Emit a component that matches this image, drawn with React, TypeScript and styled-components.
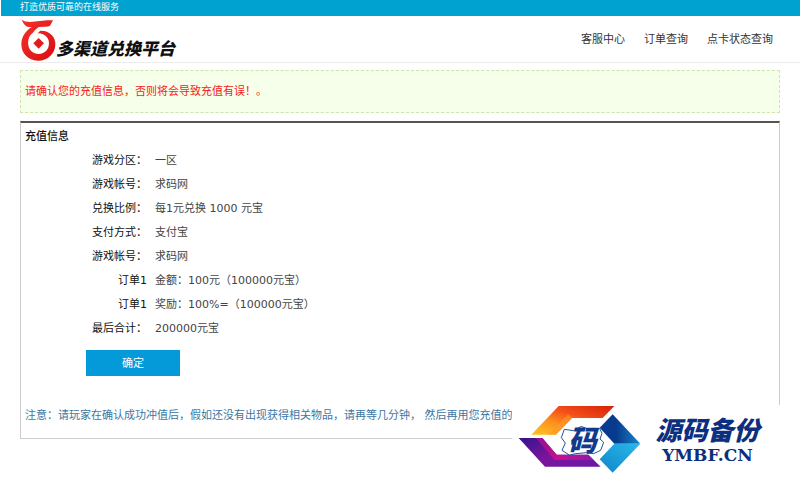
import React from "react";
import styled, { createGlobalStyle } from "styled-components";

const GlobalStyle = createGlobalStyle`
  * { box-sizing: border-box; }
  body {
    margin: 0;
    background: #fff;
    color: #444;
    font: 11px/16px "DejaVu Sans", "Noto Sans CJK SC", sans-serif;
  }
`;

const Page = styled.div`
  position: relative;
  padding-bottom: 45px;
`;

const TopBar = styled.div`
  height: 16px;
  margin-left: 1px;
  padding: 0 19px;
  background: #00a3cf;
  color: #fff;
  font-size: 9px;
  line-height: 15px;
`;

const Header = styled.header`
  display: flex;
  justify-content: space-between;
  align-items: center;
  height: 47px;
  padding: 2px 27px 0 20px;
  border-bottom: 1px solid #ececec;
`;

const Brand = styled.a`
  display: flex;
  align-items: flex-end;
  color: #111;
  text-decoration: none;
`;

const BrandMark = styled.svg`
  width: 36px;
  height: 43px;
`;

const BrandName = styled.span`
  font: italic 900 17px/28px "Noto Sans CJK SC", sans-serif;
`;

const Nav = styled.nav`
  display: flex;
  gap: 19px;
`;

const NavLink = styled.a`
  color: #333;
  text-decoration: none;
`;

const Main = styled.main`
  padding: 7px 20px 0;
`;

const Notice = styled.p`
  margin: 0 0 8px;
  padding: 13px 4px 12px;
  border: 1px dashed #cfe3b0;
  background: #f5ffe9;
  color: #f8211c;
`;

const Panel = styled.section`
  padding: 6px 4px 14px;
  border: 1px solid #ccc;
  border-top: 2px solid #555;
`;

const PanelTitle = styled.h1`
  margin: 0;
  color: #111;
  font-size: 11px;
  font-weight: 500;
`;

const Details = styled.dl`
  display: grid;
  grid-template-columns: 122px 1fr;
  column-gap: 8px;
  margin: 4px 0 9px;
  line-height: 24px;
`;

const Term = styled.dt`
  color: #111;
  text-align: right;
`;

const Value = styled.dd`
  margin: 0;
`;

const Submit = styled.button`
  display: block;
  width: 94px;
  height: 26px;
  margin: 0 0 32px 61px;
  padding: 2px 0 0;
  border: 0;
  background: #049ad9;
  color: #fff;
  font: inherit;
`;

const Hint = styled.p`
  margin: 0;
  color: #3d76a3;
`;

const Watermark = styled.aside`
  position: absolute;
  right: 18px;
  bottom: 9px;
  display: flex;
  align-items: center;
  width: 270px;
  height: 70px;
  padding: 0 8px 0 6px;
  background: #fff;
`;

const WatermarkMark = styled.svg`
  flex: none;
  width: 123px;
  height: 70px;
`;

const WatermarkText = styled.div`
  flex: 1;
  color: #0c2f80;
  text-align: center;
`;

const WatermarkName = styled.div`
  font: italic 900 26px/30px "Noto Sans CJK SC", sans-serif;
`;

const WatermarkDomain = styled.div`
  font: bold 17px/22px "DejaVu Serif", serif;
`;

const details = [
  ["游戏分区：", "一区"],
  ["游戏帐号：", "求码网"],
  ["兑换比例：", "每1元兑换 1000 元宝"],
  ["支付方式：", "支付宝"],
  ["游戏帐号：", "求码网"],
  ["订单1", "金额：100元（100000元宝）"],
  ["订单1", "奖励：100%=（100000元宝）"],
  ["最后合计：", "200000元宝"],
];

export default function App() {
  return (
    <Page>
      <GlobalStyle />
      <TopBar>打造优质可靠的在线服务</TopBar>
      <Header>
        <Brand href="#">
          <BrandMark viewBox="0 0 108 129" aria-hidden="true">
            <defs>
              <linearGradient id="ring" x1="0" y1="0" x2="1" y2="1">
                <stop offset="0" stopColor="#f3332b" />
                <stop offset="1" stopColor="#d80d12" />
              </linearGradient>
            </defs>
            <path
              fill="url(#ring)"
              d="M5 2Q14 9 30 9L82 4Q94 3 99 4L90 20Q86 23 75 23L56 24Q46 31 38 42C20 54 20 87 37 99C55 112 82 102 86 81C91 60 77 43 53 43L61 35C88 34 108 53 106 78C104 107 81 126 53 125C25 124 4 104 4 76C4 53 17 36 35 24L26 24Q13 22 5 2Z"
            />
            <path fill="#e31b1b" d="M56 57L72 73L56 89L40 73Z" />
          </BrandMark>
          <BrandName>多渠道兑换平台</BrandName>
        </Brand>
        <Nav>
          <NavLink href="#">客服中心</NavLink>
          <NavLink href="#">订单查询</NavLink>
          <NavLink href="#">点卡状态查询</NavLink>
        </Nav>
      </Header>
      <Main>
        <Notice>请确认您的充值信息，否则将会导致充值有误！。</Notice>
        <Panel>
          <PanelTitle>充值信息</PanelTitle>
          <Details>
            {details.map(([term, value], i) => (
              <React.Fragment key={i}>
                <Term>{term}</Term>
                <Value>{value}</Value>
              </React.Fragment>
            ))}
          </Details>
          <Submit type="button">确定</Submit>
          <Hint>
            注意：请玩家在确认成功冲值后，假如还没有出现获得相关物品，请再等几分钟， 然后再用您充值的
          </Hint>
        </Panel>
      </Main>
      <Watermark>
        <WatermarkMark viewBox="39 30 369 210" aria-hidden="true">
          <defs>
            <linearGradient id="warm" x1="0" y1="1" x2="1" y2="0">
              <stop offset="0" stopColor="#ffc820" />
              <stop offset="0.35" stopColor="#fd8f1e" />
              <stop offset="0.6" stopColor="#f4501a" />
              <stop offset="1" stopColor="#d42006" />
            </linearGradient>
            <linearGradient id="violet" x1="0" y1="0" x2="1" y2="1">
              <stop offset="0" stopColor="#35148c" />
              <stop offset="0.5" stopColor="#7a149c" />
              <stop offset="1" stopColor="#6a18a8" />
            </linearGradient>
            <linearGradient id="magenta" x1="0" y1="0" x2="1" y2="0">
              <stop offset="0" stopColor="#8c128f" />
              <stop offset="0.4" stopColor="#c80f8c" />
              <stop offset="1" stopColor="#8d1aa8" />
            </linearGradient>
            <linearGradient id="navy" x1="0" y1="0" x2="1" y2="0">
              <stop offset="0" stopColor="#0a3c94" />
              <stop offset="0.4" stopColor="#063a8c" />
              <stop offset="1" stopColor="#1a86cc" />
            </linearGradient>
            <linearGradient id="sky" x1="0" y1="1" x2="1" y2="0">
              <stop offset="0" stopColor="#0f86c8" />
              <stop offset="1" stopColor="#2cb8ea" />
            </linearGradient>
          </defs>
          <path fill="url(#warm)" d="M79 119L161 33H328L293 69H201L153 119Z" />
          <path fill="#ff9a2a" fillOpacity="0.6" d="M128 119L189 58L201 69L153 119Z" />
          <path fill="url(#violet)" d="M41 129H112L155 179H250L287 215H120Z" />
          <path fill="url(#magenta)" d="M92 129H112L155 179H250L266 195H148Z" />
          <path fill="url(#navy)" d="M323 58L406 146H328L284 98Z" />
          <path fill="url(#sky)" d="M328 146H406L323 233L284 193Z" />
          <path
            fill="#fff"
            stroke="#24509c"
            strokeWidth="3"
            d="M178 103L205 107L229 94L247 102L284 100L291 115L285 132L296 142L287 166L266 176L245 173L213 176L193 180L171 166L181 144L169 128Z"
          />
          <text
            x="232"
            y="169"
            textAnchor="middle"
            fontFamily="Noto Sans CJK SC, sans-serif"
            fontSize="86"
            fontWeight="900"
            fontStyle="italic"
            fill="#123a8c"
          >
            码
          </text>
        </WatermarkMark>
        <WatermarkText>
          <WatermarkName>源码备份</WatermarkName>
          <WatermarkDomain>YMBF.CN</WatermarkDomain>
        </WatermarkText>
      </Watermark>
    </Page>
  );
}
